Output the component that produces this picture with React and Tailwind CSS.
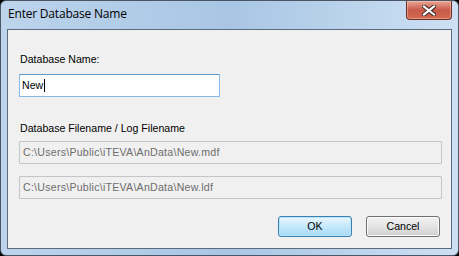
const CloseGlyph = () => (
  <svg width="14" height="11" viewBox="0 0 14 11">
    <path
      d="M2 1.5 L12 9.5 M12 1.5 L2 9.5"
      stroke="#3b2a28"
      strokeWidth="4.2"
      strokeLinecap="square"
      fill="none"
    />
    <path
      d="M2 1.5 L12 9.5 M12 1.5 L2 9.5"
      stroke="#ffffff"
      strokeWidth="2.2"
      strokeLinecap="square"
      fill="none"
    />
  </svg>
);

const PathBox = ({ value }) => (
  <div className="w-[423px] h-[23px] border border-[#c3c6c9] rounded-[1px] bg-[#f0f0f0] flex items-center pl-[3px] text-[#6d6d6d] tracking-[0.25px]">
    {value}
  </div>
);

export default function App() {
  return (
    <div className="w-[459px] h-[256px] bg-black">
      <div className="w-full h-full rounded-[6px] border border-[#4a5665] bg-gradient-to-r from-[#bdd4ec] via-[#a8c6e4] to-[#cde0f3] flex flex-col px-[6px] pb-[6px]">
        {/* Title bar */}
        <div className="h-[28px] flex items-start justify-between">
          <span className="mt-[5px] ml-[1px] text-[12px] leading-[16px] font-['Open_Sans',sans-serif] text-black tracking-[-0.2px]">
            Enter Database Name
          </span>
          <div className="w-[46px] h-[19px] rounded-b-[4px] border border-t-0 border-[#6e2e24] bg-gradient-to-b from-[#e8a796] via-[#c85a49] to-[#d26a4f] flex items-center justify-center shadow-[inset_0_0_0_1px_rgba(255,210,200,0.45)]">
            <CloseGlyph />
          </div>
        </div>

        {/* Client area */}
        <div className="flex-1 bg-[#f0f0f0] border border-[#5a6c80] flex flex-col pl-[11px] font-['Liberation_Sans',Arial,sans-serif] text-[10.6px] leading-[13px] text-black">
          <div className="mt-[23px] ml-[1px]">Database Name:</div>
          <div className="mt-[8px] w-[201px] h-[23px] bg-white border border-[#85bbe9] border-t-[#5b97c9] rounded-[1px] flex items-center pl-[2px]">
            <span>New</span>
            <span className="w-px h-[13px] bg-black ml-[1px]"></span>
          </div>
          <div className="mt-[25px] ml-[1px]">Database Filename / Log Filename</div>
          <div className="mt-[6px]">
            <PathBox value="C:\Users\Public\iTEVA\AnData\New.mdf" />
          </div>
          <div className="mt-[12px]">
            <PathBox value="C:\Users\Public\iTEVA\AnData\New.ldf" />
          </div>
          <div className="mt-[17px] flex gap-[14px] ml-[259px]">
            <button className="w-[74px] h-[21px] rounded-[3px] border border-[#3c7fb1] bg-gradient-to-b from-[#eaf6fd] via-[#c4e8fc] to-[#a7d9f5] shadow-[inset_0_0_0_1px_#b8e4fb] text-black leading-[13px]">
              OK
            </button>
            <button className="w-[74px] h-[21px] rounded-[3px] border border-[#707070] bg-gradient-to-b from-[#f2f2f2] via-[#e4e4e4] to-[#cfcfcf] shadow-[inset_0_0_0_1px_#fcfcfc] text-black leading-[13px]">
              Cancel
            </button>
          </div>
        </div>
      </div>
    </div>
  );
}
